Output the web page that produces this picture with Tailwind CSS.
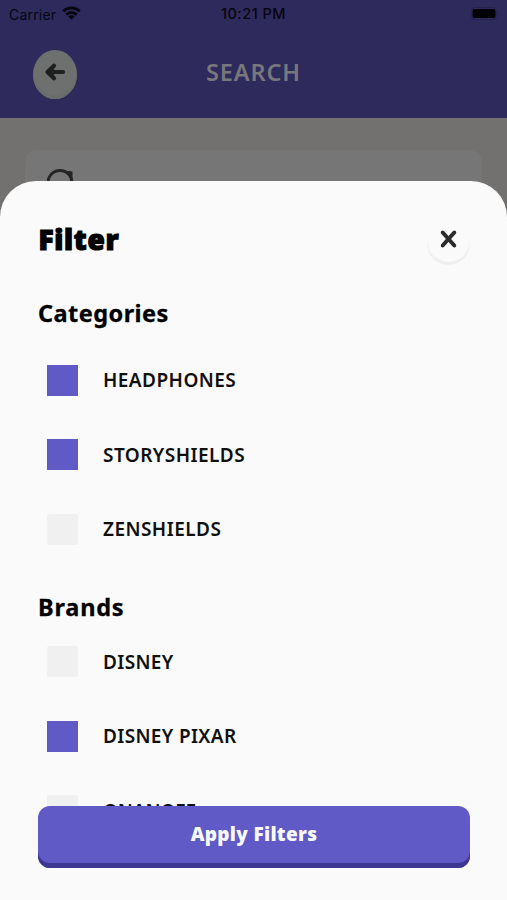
<!DOCTYPE html>
<html lang="en">
<head>
<meta charset="utf-8">
<title>Filter</title>
<script src="https://cdn.jsdelivr.net/npm/@tailwindcss/browser@4"></script>
</head>
<body class="bg-[#72716f]">
<div class="relative h-[900px] w-[507px] overflow-hidden bg-[#72716f] font-['Noto_Sans',sans-serif]">
  <header class="flex h-[118px] flex-col bg-[#2e2a5c]">
    <div class="grid h-7 grid-cols-3 items-center pl-[9px] pr-[7px] font-['Inter',sans-serif] text-[14px] text-[#07060f]">
      <div class="flex items-center gap-[6px]">
        <span class="tracking-[0.2px]">Carrier</span>
        <svg class="mb-[2px] h-[14px] w-[19px]" viewBox="0 0 19 14" fill="none" stroke="currentColor" stroke-width="2.900"><path d="M1.300 5.200a11.700 11.700 0 0 1 16.400 0M4.300 8.600a7.400 7.400 0 0 1 10.400 0"/><path d="M9.500 13.600L6.200 10.600a4.600 4.600 0 0 1 6.600 0z" fill="currentColor" stroke="none"/></svg>
      </div>
      <span class="-ml-[2px] text-center text-[14.5px] font-medium tracking-[0.5px] whitespace-nowrap">10:21 PM</span>
      <svg class="mb-px ml-auto h-[13px] w-[29px]" viewBox="0 0 29 13"><rect x=".5" y=".5" width="25" height="12" rx="3.500" fill="none" stroke="#25224d"/><rect x="1.500" y="2" width="23" height="9" rx="2" fill="#020205"/><path d="M27 4.500q2 2 0 4z" fill="#25224d"/></svg>
    </div>
    <div class="grid flex-1 grid-cols-[44px_1fr_44px] items-start px-[33px] pt-[22px]">
      <button class="flex h-[49px] w-11 items-start justify-center rounded-[50%] bg-[#6e706f] pt-3 shadow-[inset_0_-4px_0_#6b6d6c]">
        <svg class="h-5 w-[22px]" viewBox="0 0 22 20" fill="none" stroke="#1f1f1f" stroke-width="4.200" stroke-linecap="round" stroke-linejoin="round"><path d="M19 10H5M10 3.800L3.500 10l6.500 6.200"/><path d="M10 5L4 10l6 5z" fill="#1f1f1f" stroke="none"/></svg>
      </button>
      <h1 class="pt-[6px] text-center text-[23.5px] leading-8 font-semibold tracking-[0.9px] text-[#77777c]">SEARCH</h1>
    </div>
  </header>
  <div class="mx-[25px] mt-8 h-[60px] rounded-xl bg-[#767676] pt-[19px] pl-[22px]">
    <svg class="h-8 w-8" viewBox="0 0 32 32" fill="none" stroke="#242424" stroke-width="2.800"><circle cx="13" cy="13.500" r="12"/><path d="M16 1.500L25.500 2.500v12h-2V8z" fill="#242424" stroke="none"/><path d="M22 22l8 8"/></svg>
  </div>

  <section class="absolute inset-x-0 top-[181px] bottom-0 rounded-t-[36px] bg-[#fafafa] pt-9 pr-9 pl-[38px] text-black">
    <div class="flex items-start justify-between">
      <h2 class="pt-[4px] pl-[0.5px] text-[28px] leading-9 font-black tracking-[0.7px] [-webkit-text-stroke:1.2px_black] [stroke-linejoin:round]">Filter</h2>
      <button class="mr-px flex h-[48px] w-[43px] items-start justify-center rounded-[22px] bg-[#fafafa] pt-[13px] shadow-[inset_0_-3px_1px_#eeeeee]">
        <svg class="h-[18px] w-4 -translate-x-[0.5px]" viewBox="0 0 16 18" fill="none" stroke="#2b2b2b" stroke-width="4" stroke-linecap="round"><path d="M2.200 2.500l11.600 13M13.800 2.500L2.200 15.500"/></svg>
      </button>
    </div>
    <h3 class="mt-[32px] text-[23.5px] leading-8 font-bold tracking-[0.45px] [-webkit-text-stroke:0.3px_black]">Categories</h3>
    <ul class="mt-[36px] flex flex-col gap-[44px] pl-[9px] text-[19px] leading-[30px] font-semibold tracking-[0.45px] text-[#101010]">
      <li class="flex h-[30.500px] items-center gap-[25px]"><span class="size-[31px] bg-[#5f5ac5]"></span><span>HEADPHONES</span></li>
      <li class="flex h-[30.500px] items-center gap-[25px]"><span class="size-[31px] bg-[#5f5ac5]"></span><span>STORYSHIELDS</span></li>
      <li class="flex h-[30.500px] items-center gap-[25px]"><span class="size-[31px] rounded-[2px] bg-[#f0f0f0]"></span><span>ZENSHIELDS</span></li>
    </ul>
    <h3 class="mt-[46px] text-[23.5px] leading-8 font-bold tracking-[0.8px] [-webkit-text-stroke:0.3px_black]">Brands</h3>
    <ul class="mt-[24px] flex flex-col gap-[44px] pl-[9px] text-[19px] leading-[30px] font-semibold tracking-[0.35px] text-[#101010]">
      <li class="flex h-[30.500px] items-center gap-[25px]"><span class="size-[31px] rounded-[2px] bg-[#f0f0f0]"></span><span>DISNEY</span></li>
      <li class="flex h-[30.500px] items-center gap-[25px]"><span class="size-[31px] bg-[#5f5ac5]"></span><span>DISNEY PIXAR</span></li>
      <li class="flex h-[30.500px] items-center gap-[25px]"><span class="size-[31px] rounded-[2px] bg-[#f0f0f0]"></span><span class="tracking-[-0.1px]">ONANOFF</span></li>
    </ul>
    <button class="absolute right-[37px] bottom-8 left-[38px] h-[62px] rounded-xl bg-[#5f5ac5] pb-[5px] text-[19px] font-black tracking-[0.3px] text-[#f8f8ff] shadow-[inset_0_-5px_0_#3d3791]">Apply Filters</button>
  </section>
</div>
</body>
</html>
